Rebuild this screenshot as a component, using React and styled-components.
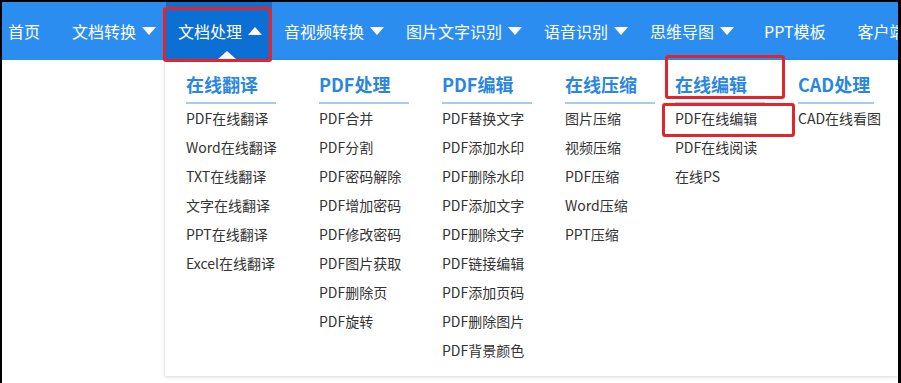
import React from "react";
import styled, { createGlobalStyle } from "styled-components";

const GlobalStyle = createGlobalStyle`
  html, body { margin: 0; padding: 0; background: #fff; }
  body { font-family: "Noto Sans CJK SC", "Noto Sans", "Liberation Sans", sans-serif; }
  * { box-sizing: border-box; }
`;

const Frame = styled.div`
  position: relative;
  width: 901px;
  height: 383px;
  border-top: 2px solid #000;
  border-left: 2px solid #000;
  border-right: 3px solid #000;
  overflow: hidden;
  background: #fff;
`;

const NavBar = styled.nav`
  display: flex;
  align-items: stretch;
  height: 58px;
  background: #2c8df0;
  white-space: nowrap;
`;

const NavTrack = styled.div`
  display: flex;
  align-items: stretch;
  margin-left: -14px;
`;

const NavItem = styled.div`
  position: relative;
  display: flex;
  align-items: center;
  padding: ${(p) => (p.$plain ? "0 20px" : "0 10px 0 12px")};
  padding-left: ${(p) => (p.$last ? "12px" : undefined)};
  color: #fff;
  font-size: 16px;
  background: ${(p) => (p.$active ? "#0c6fd4" : "transparent")};
  flex-shrink: 0;
`;

const Caret = styled.svg`
  width: 14px;
  height: 8px;
  margin-left: 6px;
  flex-shrink: 0;
`;

const Pointer = styled.div`
  position: absolute;
  bottom: 0;
  left: calc(50% + 8px);
  transform: translateX(-50%);
  width: 0;
  height: 0;
  border-left: 10px solid transparent;
  border-right: 10px solid transparent;
  border-bottom: 9px solid #fff;
`;

const Body = styled.div`
  display: flex;
  height: calc(100% - 58px);
`;

const Side = styled.div`
  width: 163px;
  flex-shrink: 0;
`;

const Panel = styled.div`
  flex: 1;
  height: 316px;
  background: #fff;
  box-shadow: 0 1px 4px rgba(0, 0, 0, 0.16);
  padding: 12px 0 11px 21px;
  display: grid;
  grid-template-columns: 133px 123px 123px 110px 123px auto;
  align-items: start;
`;

const Column = styled.div`
  display: flex;
  flex-direction: column;
`;

const Heading = styled.div`
  width: ${(p) => p.$w || 90}px;
  font-size: 18px;
  line-height: 24px;
  font-weight: 700;
  color: #2b86de;
  padding-bottom: 6px;
  border-bottom: 2px solid #a9c9ee;
`;

const Link = styled.div`
  font-size: 14px;
  line-height: 29px;
  color: #333;
`;

const Mark = styled.div`
  position: absolute;
  border: 3px solid #e1252b;
  border-radius: 3px;
  pointer-events: none;
`;

const Down = ({ up }) => (
  <Caret viewBox="0 0 14 8">
    {up ? <path d="M0 8 L7 0 L14 8 Z" fill="#fff" /> : <path d="M0 0 L14 0 L7 8 Z" fill="#fff" />}
  </Caret>
);

const navItems = [
  { t: "首页", plain: true },
  { t: "文档转换" },
  { t: "文档处理", active: true },
  { t: "音视频转换" },
  { t: "图片文字识别" },
  { t: "语音识别" },
  { t: "思维导图" },
  { t: "PPT模板", plain: true },
  { t: "客户端", plain: true, last: true },
];

const columns = [
  { h: "在线翻译", items: ["PDF在线翻译", "Word在线翻译", "TXT在线翻译", "文字在线翻译", "PPT在线翻译", "Excel在线翻译"] },
  { h: "PDF处理", items: ["PDF合并", "PDF分割", "PDF密码解除", "PDF增加密码", "PDF修改密码", "PDF图片获取", "PDF删除页", "PDF旋转"] },
  { h: "PDF编辑", items: ["PDF替换文字", "PDF添加水印", "PDF删除水印", "PDF添加文字", "PDF删除文字", "PDF链接编辑", "PDF添加页码", "PDF删除图片", "PDF背景颜色"] },
  { h: "在线压缩", items: ["图片压缩", "视频压缩", "PDF压缩", "Word压缩", "PPT压缩"] },
  { h: "在线编辑", items: ["PDF在线编辑", "PDF在线阅读", "在线PS"] },
  { h: "CAD处理", w: 76, items: ["CAD在线看图"] },
];

export default function App() {
  return (
    <>
      <GlobalStyle />
      <Frame>
        <NavBar>
          <NavTrack>
            {navItems.map((n) => (
              <NavItem key={n.t} $plain={n.plain} $last={n.last} $active={n.active}>
                {n.t}
                {!n.plain && <Down up={n.active} />}
                {n.active && <Pointer />}
              </NavItem>
            ))}
          </NavTrack>
        </NavBar>
        <Body>
          <Side />
          <Panel>
            {columns.map((c) => (
              <Column key={c.h}>
                <Heading $w={c.w}>{c.h}</Heading>
                {c.items.map((i) => (
                  <Link key={i}>{i}</Link>
                ))}
              </Column>
            ))}
          </Panel>
        </Body>
        <Mark style={{ left: 161, top: 5, width: 109, height: 55 }} />
        <Mark style={{ left: 663, top: 53, width: 120, height: 44 }} />
        <Mark style={{ left: 660, top: 101, width: 133, height: 34 }} />
      </Frame>
    </>
  );
}
